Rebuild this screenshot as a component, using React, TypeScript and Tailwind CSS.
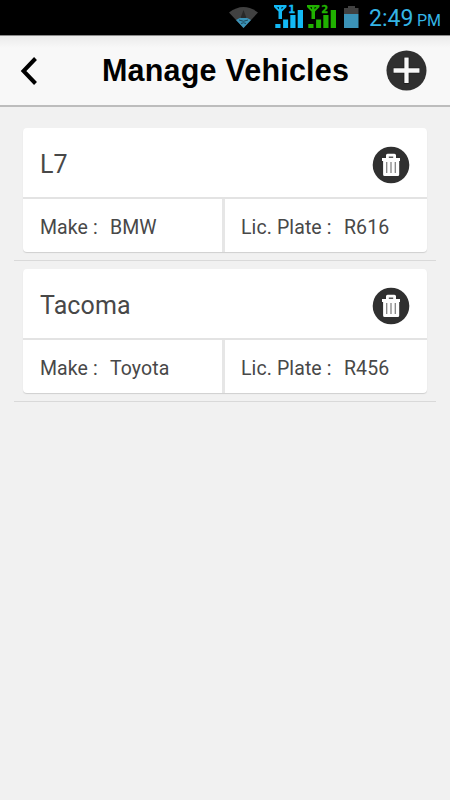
import React from 'react'

interface Vehicle {
  name: string;
  make: string;
  plate: string;
}

const vehicles: Vehicle[] = [
  { name: "L7", make: "BMW", plate: "R616" },
  { name: "Tacoma", make: "Toyota", plate: "R456" },
];

const WifiIcon = () => (
  <svg width="30" height="22" viewBox="229 6 30 22">
    <path d="M229 12.500Q243.500 1.500 258 12.500L243.500 28Z" fill="#414141" />
    <path d="M236 20Q243.500 14.500 251 20L243.500 28Z" fill="#3b93b8" />
    <path d="M243.500 10L240.500 18H246.500Z" fill="#292929" />
    <path d="M239 20Q243.500 22.500 248 20M241 23.500Q243.500 22 246 23.500" stroke="#1f4a5c" strokeWidth="1" fill="none" />
  </svg>
);

const SignalIcon = ({ sim, color }: { sim: string; color: string }) => (
  <svg width="30" height="24" viewBox="0 0 30 24" fill={color}>
    <path d="M0 1H12.500V3L8 7.500V15H4.500V7.500L0 3Z" />
    <path d="M3 3.300H5V5.300ZM7.500 3.300H9.500L7.500 5.300Z" fill="#000" />
    <rect x="1.300" y="20" width="5.200" height="4" />
    <rect x="9.100" y="15.500" width="5" height="8.500" />
    <rect x="16.300" y="11" width="5.200" height="13" />
    <rect x="23.700" y="6" width="5.300" height="18" />
    <text x="14.300" y="9" fontSize="11" fontWeight="700" stroke={color} strokeWidth="0.300" fontFamily="DejaVu Sans, sans-serif" textLength="7" lengthAdjust="spacingAndGlyphs">{sim}</text>
  </svg>
);

const BatteryIcon = () => (
  <svg width="15" height="22" viewBox="0 0 15 22">
    <path d="M4 0H11V2H14.500V8H0V2H4Z" fill="#414141" />
    <rect y="8" width="14.500" height="14" fill="#3b93b8" />
  </svg>
);

const TrashIcon = () => (
  <svg width="38" height="38" viewBox="0 0 38 38">
    <circle cx="19" cy="19" r="18.300" fill="#303030" />
    <path d="M14 12V9.300Q14 7.700 15.600 7.700H22.400Q24 7.700 24 9.300V12H28V15H27.200V28.500Q27.200 30 25.700 30H12.600Q11.100 30 11.100 28.500V15H10V12Z" fill="#fff" />
    <rect x="16.800" y="10.600" width="4.400" height="1.200" fill="#303030" />
    <path d="M14.700 16V27M19 16V27M23.300 16V27" stroke="#858585" strokeWidth="1.300" />
  </svg>
);

const VehicleCard = ({ vehicle }: { vehicle: Vehicle }) => (
  <div className="h-[141px] border-b border-[#d9d9d9] px-[9px] pt-[8px]">
    <div className="h-[124px] overflow-hidden rounded-[4px] bg-white shadow-[0_1px_1px_#cfcfcf]">
      <div className="flex h-[71px] items-center justify-between border-b-[2px] border-[#e3e3e3] px-[17px]">
        <span className="pt-[5px] text-[25px] tracking-[0.1px]">{vehicle.name}</span>
        <button className="mt-[4px]"><TrashIcon /></button>
      </div>
      <div className="flex h-[53px] items-center text-[19.500px] tracking-[0.1px]">
        <div className="flex h-full w-[202px] items-center border-r-[3px] border-[#e6e6e6] pl-[17px] pt-[4px]">
          <span className="w-[70px]">Make :</span>
          <span>{vehicle.make}</span>
        </div>
        <div className="flex h-full flex-1 items-center pl-[16px] pt-[4px]">
          <span className="w-[103px]">Lic. Plate :</span>
          <span>{vehicle.plate}</span>
        </div>
      </div>
    </div>
  </div>
);

const App = () => {
  return (
    <div className="h-[800px] w-[450px] overflow-hidden bg-[#f1f1f1] font-[Roboto,sans-serif] text-[#484848]">

      {/* Status bar */}
      <div className="flex h-[35px] items-start bg-black pl-[229px] text-[#35b5e5]">
        <div className="mt-[6px]"><WifiIcon /></div>
        <div className="ml-[15px] mt-[4px]"><SignalIcon sim="1" color="#13b9f5" /></div>
        <div className="ml-[3px] mt-[4px]"><SignalIcon sim="2" color="#20b100" /></div>
        <div className="ml-[7px] mt-[6px]"><BatteryIcon /></div>
        <div className="ml-[10px] flex h-[36px] items-baseline whitespace-nowrap pt-[1px] leading-[35px]">
          <span className="w-[48px] text-[23px]">2:49</span>
          <span className="text-[16px]">PM</span>
        </div>
      </div>

      {/* Header */}
      <div className="flex h-[72px] items-center border-b-2 border-t border-b-[#bdbdbd] border-t-[#8a8a8a] bg-[linear-gradient(#ebebeb,#f8f8f8_12px)] text-black">
        <button className="ml-[20px] w-[18px]">
          <svg width="18" height="28" viewBox="0 0 18 28" fill="none" stroke="#000" strokeWidth="4">
            <path d="M15.500 1.500L3.500 14L15.500 26.500" />
          </svg>
        </button>
        <h1 className="ml-[64px] w-[284px] whitespace-nowrap font-['Liberation_Sans',sans-serif] text-[30.500px] font-bold tracking-[0.2px]">Manage Vehicles</h1>
        <button>
          <svg width="41" height="41" viewBox="0 0 41 41">
            <circle cx="20.500" cy="20.500" r="20" fill="#303030" />
            <path d="M20.500 7V33.500M7 20.500H34" stroke="#111" strokeWidth="5.500" />
            <path d="M20.500 7.500V33M7.500 20.500H33.500" stroke="#f8f8f8" strokeWidth="4.300" />
          </svg>
        </button>
      </div>

      {/* Vehicle list */}
      <div className="px-[14px] pt-[13px]">
        {vehicles.map((vehicle) => (
          <VehicleCard key={vehicle.name} vehicle={vehicle} />
        ))}
      </div>

    </div>
  );
};

export default App;
